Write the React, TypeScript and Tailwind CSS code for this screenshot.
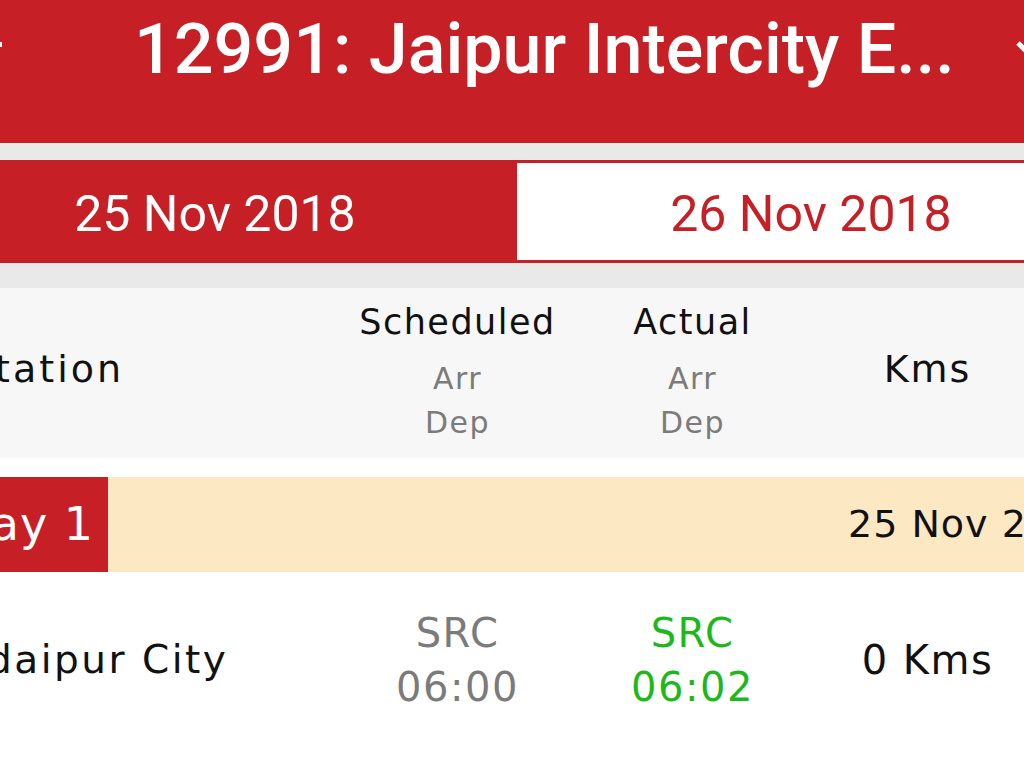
import React from 'react';

const RED = 'bg-[#c62026]';

const App = () => {
  return (
    <div className="w-[1024px] h-[768px] overflow-hidden bg-white font-['DejaVu_Sans',sans-serif]">
      {/* Toolbar */}
      <div className={`h-[143px] ${RED} flex items-start overflow-hidden`}>
        <div className="w-[2px] h-[5px] bg-white mt-[42px] shrink-0"></div>
        <h1 className="ml-[132px] pt-[13px] text-white text-[70px] leading-[72px] font-medium font-['Roboto',sans-serif] whitespace-nowrap">
          12991: Jaipur Intercity E...
        </h1>
        <svg className="ml-auto mt-[40px] -mr-[22px] shrink-0" width="30" height="20" viewBox="0 0 30 20">
          <path d="M2 3 L15 16 L28 3" fill="none" stroke="white" strokeWidth="5" />
        </svg>
      </div>

      <div className="h-[17px] bg-[#e9e9e9]"></div>

      {/* Date tabs */}
      <div className={`h-[103px] ${RED} flex py-[3px] -ml-[87px] font-['Roboto',sans-serif]`}>
        <div className="w-[604px] shrink-0 flex items-center justify-center pt-[6px] text-white text-[50px]">
          25 Nov 2018
        </div>
        <div className="w-[588px] shrink-0 bg-white flex items-center justify-center pt-[6px] text-[#c62026] text-[50px]">
          26 Nov 2018
        </div>
      </div>

      <div className="h-[25px] bg-[#e9e9e9]"></div>

      {/* Table header */}
      <div className="h-[170px] bg-[#f7f7f7] flex items-center -ml-[40px] w-[1085px] text-[#111]">
        <div className="w-[380px] pl-[8px] pb-[8px] text-[38px] leading-[40px] tracking-[3px] shrink-0">Station</div>
        <div className="w-[235px] flex flex-col items-center shrink-0 tracking-[1.5px]">
          <div className="text-[35px] leading-[40px]">Scheduled</div>
          <div className="mt-[15px] text-[30px] leading-[44px] text-[#7b7b7b]">Arr</div>
          <div className="text-[30px] leading-[44px] text-[#7b7b7b]">Dep</div>
        </div>
        <div className="w-[235px] flex flex-col items-center shrink-0 tracking-[1.5px]">
          <div className="text-[35px] leading-[40px]">Actual</div>
          <div className="mt-[15px] text-[30px] leading-[44px] text-[#7b7b7b]">Arr</div>
          <div className="text-[30px] leading-[44px] text-[#7b7b7b]">Dep</div>
        </div>
        <div className="w-[235px] pb-[8px] text-center text-[38px] leading-[40px] tracking-[2px] shrink-0">Kms</div>
      </div>

      <div className="h-[19px]"></div>

      {/* Day row */}
      <div className="h-[95px] flex bg-[#fde8c4]">
        <div className={`w-[148px] -ml-[40px] shrink-0 ${RED} flex items-center justify-end pr-[14px] text-white text-[46px] tracking-[1px] whitespace-nowrap`}>
          Day 1
        </div>
        <div className="flex-1 flex items-center pl-[740px] text-[#111] text-[38px] tracking-[1px] whitespace-nowrap">
          25 Nov 2018
        </div>
      </div>

      {/* Station row */}
      <div className="h-[176px] flex items-center -ml-[40px] w-[1085px] tracking-[1.5px]">
        <div className="w-[380px] -ml-[4px] text-[39px] tracking-[2.5px] text-[#111] shrink-0 whitespace-nowrap">Udaipur City</div>
        <div className="w-[235px] ml-[4px] flex flex-col items-center shrink-0 text-[#7b7b7b] text-[40px] leading-[54px]">
          <div>SRC</div>
          <div>06:00</div>
        </div>
        <div className="w-[235px] flex flex-col items-center shrink-0 text-[#1cb81c] text-[40px] leading-[54px]">
          <div>SRC</div>
          <div>06:02</div>
        </div>
        <div className="w-[235px] text-center text-[40px] text-[#111] shrink-0">0 Kms</div>
      </div>
    </div>
  );
};

export default App;
